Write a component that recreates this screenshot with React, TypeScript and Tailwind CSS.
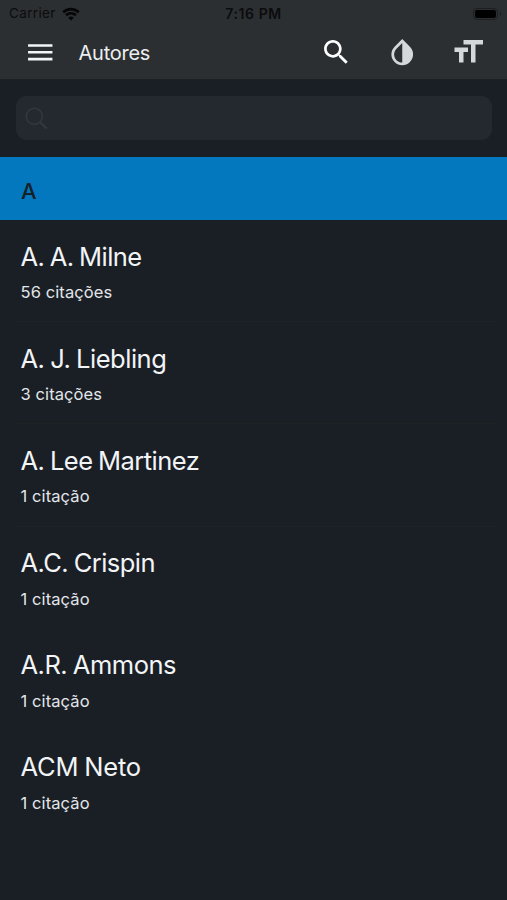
import React from 'react';

const authors = [
  { name: 'A. A. Milne', quotes: '56 citações', tracking: 'tracking-[-0.6px]', divider: true },
  { name: 'A. J. Liebling', quotes: '3 citações', tracking: 'tracking-[-0.47px]', divider: true },
  { name: 'A. Lee Martinez', quotes: '1 citação', tracking: 'tracking-[-0.55px]', divider: true },
  { name: 'A.C. Crispin', quotes: '1 citação', tracking: 'tracking-[-0.55px]', divider: false },
  { name: 'A.R. Ammons', quotes: '1 citação', tracking: 'tracking-[-0.5px]', divider: false },
  { name: 'ACM Neto', quotes: '1 citação', tracking: 'tracking-[-0.2px]', divider: false },
];

const StatusBar: React.FC = () => (
  <div className="grid h-[27px] grid-cols-3 items-center px-[9px] text-[13.5px] text-[#0b0c0d]">
    <div className="flex items-center gap-[6px]">
      <span className="tracking-[0.35px]">Carrier</span>
      <svg className="h-[14px] w-[18px]" viewBox="0 0 18 14" fill="none" stroke="#050606" strokeWidth="2.6">
        <path d="M1.2 5.3a11.2 11.2 0 0 1 15.6 0" />
        <path d="M4.1 8.3a7 7 0 0 1 9.8 0" />
        <path d="M9 13.6 6.2 10.8a4 4 0 0 1 5.6 0z" fill="#050606" stroke="none" />
      </svg>
    </div>
    <span className="text-center text-[14px] font-semibold tracking-[0.6px]">7:16 PM</span>
    <div className="-mr-[3px] flex items-center justify-end gap-[2px]">
      <div className="h-[12px] w-[25px] rounded-[4px] border border-[#1c1e20] p-px">
        <div className="h-full rounded-[2px] bg-black" />
      </div>
      <div className="h-[4px] w-[1.5px] rounded-r bg-[#1c1e20]" />
    </div>
  </div>
);

const Toolbar: React.FC = () => (
  <div className="flex h-[50px] items-center pl-[24px] pr-[21.5px]">
    <svg className="h-[32.5px] w-[32.5px] text-[#f4f5f7]" viewBox="0 0 24 24" fill="currentColor">
      <path d="M3 18h18v-2H3v2zm0-5h18v-2H3v2zm0-7v2h18V6H3z" />
    </svg>
    <h1 className="ml-[22px] flex-1 pt-px text-[20px] tracking-[-0.25px] text-[#eceef0]">Autores</h1>
    <svg className="h-[32.5px] w-[32.5px] text-white" viewBox="0 0 24 24" fill="currentColor">
      <path d="M15.5 14h-.79l-.28-.27C15.41 12.59 16 11.11 16 9.5 16 5.91 13.09 3 9.5 3S3 5.91 3 9.5 5.91 16 9.5 16c1.61 0 3.09-.59 4.23-1.57l.27.28v.79l5 4.99L20.49 19l-4.99-5zm-6 0C7.01 14 5 11.99 5 9.5S7.01 5 9.5 5 14 7.01 14 9.5 11.99 14 9.5 14z" />
    </svg>
    <svg className="ml-[33.5px] h-[32.5px] w-[32.5px] text-[#d5d8da]" viewBox="0 0 24 24" fill="currentColor">
      <path d="M17.66 7.93L12 2.27 6.34 7.93c-3.12 3.12-3.12 8.19 0 11.31C7.9 20.8 9.95 21.58 12 21.58c2.05 0 4.1-.78 5.66-2.34 3.12-3.12 3.12-8.19 0-11.31zM12 19.59c-1.6 0-3.11-.62-4.24-1.76C6.62 16.69 6 15.19 6 13.59s.62-3.11 1.76-4.24L12 5.1v14.49z" />
    </svg>
    <svg className="ml-[31.5px] h-[36px] w-[36px] text-[#d5d8da]" viewBox="0 0 24 24" fill="currentColor">
      <path d="M9 4v3h5v12h3V7h5V4H9zm-6 8h3v7h3v-7h3V9H3v3z" />
    </svg>
  </div>
);

const SearchField: React.FC = () => (
  <div className="pt-[16px] pr-[15px] pb-[17px] pl-[16px]">
    <div className="flex h-[44px] items-center rounded-[11px] bg-[#24292f] pl-[9px]">
      <svg className="h-[23px] w-[23px]" viewBox="0 0 23 23" fill="none" stroke="#33383d">
        <circle cx="9.3" cy="9.3" r="8" strokeWidth="1.5" />
        <path d="M15.2 15.2l6.5 6.3" strokeWidth="2.2" />
      </svg>
    </div>
  </div>
);

const App: React.FC = () => {
  return (
    <div className="h-[900px] w-[507px] overflow-hidden bg-[#1a1f26] font-['Inter',sans-serif]">
      <header className="h-[80px] border-b border-[#1d2125] bg-[#2b2f32]">
        <StatusBar />
        <Toolbar />
      </header>
      <SearchField />
      <div className="flex h-[63px] items-center bg-[#0378be] pl-[21px] pt-[6px] text-[22px] font-medium text-[#142129]">
        A
      </div>
      <ul>
        {authors.map((author) => (
          <li key={author.name} className="h-[102.2px] pl-[15px] pr-[11px]">
            <div
              className={
                author.divider
                  ? 'h-full border-b border-[#1d2325] pl-[5.5px] pt-[19.5px]'
                  : 'h-full pl-[5.5px] pt-[19.5px]'
              }
            >
              <p className={`text-[25.5px] leading-[34px] text-[#f2f4f6] [word-spacing:-1px] ${author.tracking}`}>
                {author.name}
              </p>
              <p className="mt-[6.5px] text-[16.5px] leading-[24px] tracking-[0.1px] text-[#e3e6e9]">{author.quotes}</p>
            </div>
          </li>
        ))}
      </ul>
    </div>
  );
};

export default App;
